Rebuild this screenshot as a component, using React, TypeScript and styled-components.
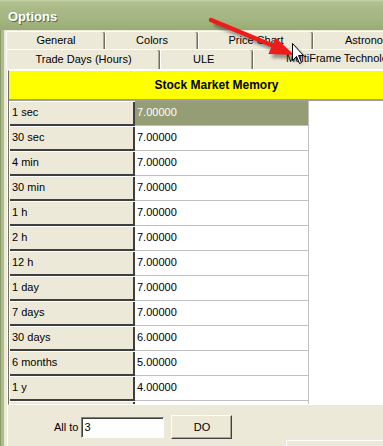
import React from 'react';
import styled, { createGlobalStyle } from 'styled-components';

const Global = createGlobalStyle`
  html, body { margin: 0; padding: 0; background: #ece9d8; overflow: hidden; }
  body { font-family: "Liberation Sans", Arial, sans-serif; font-size: 11px; color: #000; }
  * { box-sizing: border-box; }
`;

const Window = styled.div`
  position: relative;
  width: 383px;
  height: 446px;
  overflow: hidden;
  display: flex;
  flex-direction: column;
`;

const TitleBar = styled.div`
  flex: none;
  height: 30px;
  display: flex;
  align-items: center;
  padding: 2px 0 0 8px;
  background: linear-gradient(
    to bottom,
    #c6d2a8 0px,
    #b3c292 2px,
    #a8b985 10px,
    #a2b47e 22px,
    #98ab73 30px
  );
`;

const Title = styled.span`
  color: #fff;
  font: bold 13px "Liberation Sans", Arial, sans-serif;
  text-shadow: 1px 1px 0 #5d6a42;
`;

const Body = styled.div`
  flex: 1;
  min-height: 0;
  display: flex;
  border-left: 1px solid #8b9a6a;
`;

const Client = styled.div`
  flex: 1;
  min-width: 0;
  border-left: 3px solid #aebd8d;
  background: #ece9d8;
  display: flex;
  flex-direction: column;
`;

const TabStrip = styled.div`
  flex: none;
  padding: 1px 0 0 2px;
  display: flex;
  flex-direction: column;
`;

const TabRow = styled.div<{ $h: number }>`
  display: flex;
  height: ${(p) => p.$h}px;
  white-space: nowrap;
`;

const Tab = styled.div<{ $w: number; $pl?: number; $selected?: boolean }>`
  flex: none;
  width: ${(p) => p.$w}px;
  height: 100%;
  display: flex;
  align-items: center;
  justify-content: ${(p) => (p.$pl !== undefined ? 'flex-start' : 'center')};
  padding-left: ${(p) => p.$pl ?? 0}px;
  padding-bottom: ${(p) => (p.$selected ? 3 : 1)}px;
  background: #ece9d8;
  border-top: 1px solid #fff;
  border-left: 1px solid #fff;
  border-radius: 2px 2px 0 0;
  box-shadow: ${(p) =>
    p.$selected ? 'none' : 'inset -1px 0 0 #716f64, inset -2px 0 0 #aca899'};
`;

const Page = styled.div`
  flex: 1;
  min-height: 0;
  margin-left: 3px;
  border-top: 1px solid #fff;
  border-left: 1px solid #fff;
  display: flex;
  flex-direction: column;
`;

const Grid = styled.div`
  flex: none;
  width: 416px;
  height: 335px;
  background: #fff;
  border-top: 1px solid #fff;
  border-left: 1px solid #716f64;
  border-bottom: 1px solid #fff;
  display: flex;
  flex-direction: column;
  overflow: hidden;
`;

const GridTitle = styled.div`
  flex: none;
  height: 28px;
  background: #ffff00;
  display: flex;
  align-items: center;
  justify-content: center;
  font: bold 12px "Liberation Sans", Arial, sans-serif;
`;

const GridDivider = styled.div`
  flex: none;
  height: 2px;
  background: #a0a0a0;
`;

const Row = styled.div`
  flex: none;
  height: 25px;
  display: flex;
`;

const RowHead = styled.div`
  flex: none;
  width: 126px;
  height: 100%;
  background: #ece9d8;
  display: flex;
  align-items: center;
  padding: 0 0 3px 3px;
  box-shadow: inset 1px 1px 0 #fff, inset -2px -2px 0 #3f3f3f;
`;

const Cell = styled.div<{ $selected?: boolean }>`
  flex: none;
  width: 174px;
  height: 100%;
  display: flex;
  align-items: center;
  padding: 0 0 3px 2px;
  background: ${(p) => (p.$selected ? '#959d74' : '#fff')};
  color: ${(p) => (p.$selected ? '#fff' : '#000')};
  border-right: 1px solid #c0c0c0;
  border-bottom: 1px solid #c0c0c0;
`;

const Controls = styled.div`
  flex: none;
  height: 24px;
  margin-top: 10px;
  padding-left: 46px;
  display: flex;
  align-items: center;
`;

const Label = styled.span`
  margin-right: 3px;
`;

const TextBox = styled.div`
  width: 83px;
  height: 21px;
  background: #fff;
  border: 1px solid;
  border-color: #808080 #fff #fff #808080;
  box-shadow: inset 1px 1px 0 #404040;
  display: flex;
  align-items: center;
  padding: 0 0 1px 2px;
  margin-right: 7px;
`;

const Button = styled.div<{ $w: number }>`
  flex: none;
  width: ${(p) => p.$w}px;
  height: 24px;
  background: #ece9d8;
  border: 1px solid;
  border-color: #fff #404040 #404040 #fff;
  box-shadow: inset -1px -1px 0 #aca899;
  display: flex;
  align-items: center;
  justify-content: center;
`;

const Footer = styled.div`
  flex: none;
  margin-top: 1px;
  padding-left: 278px;
  display: flex;
`;

const Overlay = styled.svg`
  position: absolute;
  left: 0;
  top: 0;
  pointer-events: none;
`;

const rows: [string, string][] = [
  ['1 sec', '7.00000'],
  ['30 sec', '7.00000'],
  ['4 min', '7.00000'],
  ['30 min', '7.00000'],
  ['1 h', '7.00000'],
  ['2 h', '7.00000'],
  ['12 h', '7.00000'],
  ['1 day', '7.00000'],
  ['7 days', '7.00000'],
  ['30 days', '6.00000'],
  ['6 months', '5.00000'],
  ['1 y', '4.00000'],
  ['', ''],
];

export default function App() {
  return (
    <Window>
      <Global />
      <TitleBar>
        <Title>Options</Title>
      </TitleBar>
      <Body>
        <Client>
          <TabStrip>
            <TabRow $h={18}>
              <Tab $w={99}>General</Tab>
              <Tab $w={93}>Colors</Tab>
              <Tab $w={115}>Price Chart</Tab>
              <Tab $w={120} $pl={31}>Astronomy</Tab>
            </TabRow>
            <TabRow $h={20}>
              <Tab $w={154}>Trade Days (Hours)</Tab>
              <Tab $w={93} $pl={32}>ULE</Tab>
              <Tab $w={180} $pl={32} $selected>MultiFrame Technology</Tab>
            </TabRow>
          </TabStrip>
          <Page>
            <Grid>
              <GridTitle>Stock Market Memory</GridTitle>
              <GridDivider />
              {rows.map(([label, value], i) => (
                <Row key={i}>
                  <RowHead>{label}</RowHead>
                  <Cell $selected={i === 0}>{value}</Cell>
                </Row>
              ))}
            </Grid>
            <Controls>
              <Label>All to</Label>
              <TextBox>3</TextBox>
              <Button $w={61}>DO</Button>
            </Controls>
            <Footer>
              <Button $w={110} />
            </Footer>
          </Page>
        </Client>
      </Body>
      <Overlay width={383} height={446} viewBox="0 0 383 446">
        <defs>
          <filter id="blur" x="-20%" y="-20%" width="140%" height="140%">
            <feGaussianBlur stdDeviation="1.6" />
          </filter>
        </defs>
        <g filter="url(#blur)" opacity={0.45} transform="translate(3 4)">
          <line x1={211} y1={20} x2={275} y2={46.5} stroke="#303030" strokeWidth={4.5} />
          <polygon points="294,55 268.4,54 275.4,37.4" fill="#303030" />
        </g>
        <line x1={211} y1={20} x2={275} y2={46.5} stroke="#ee1b1b" strokeWidth={4.5} strokeLinecap="round" />
        <polygon points="294,55 268.4,54 275.4,37.4" fill="#ee1b1b" />
        <g transform="translate(292.5 43.5)">
          <polygon points="1,1 1,19 5,15 8,21 10,20 7,14 13,14" fill="#000" opacity={0.3} filter="url(#blur)" />
          <polygon points="0,0 0,17 4,13 7,20 9,19 6,12 11,12" fill="#fff" stroke="#000" strokeWidth={1} strokeLinejoin="miter" />
        </g>
      </Overlay>
    </Window>
  );
}
